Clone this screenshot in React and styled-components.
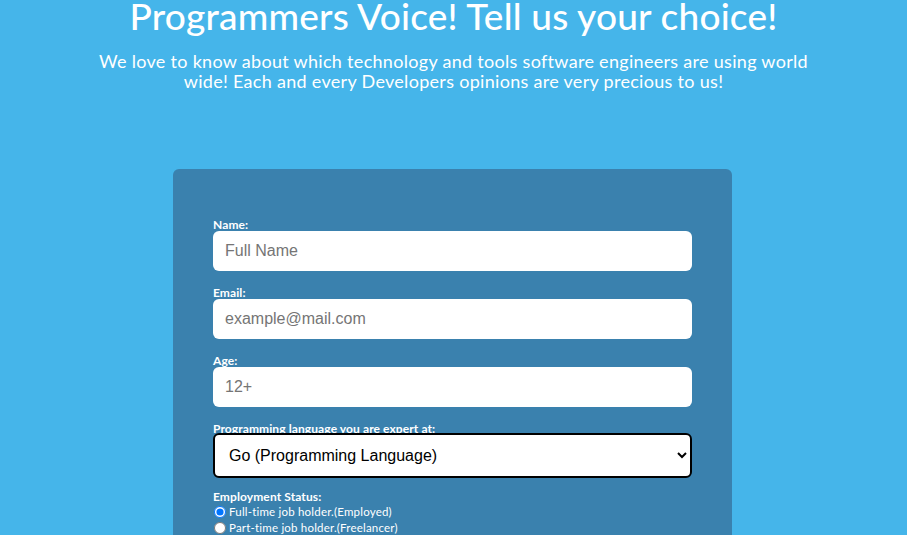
import React from "react";
import styled, { createGlobalStyle } from "styled-components";

const GlobalStyle = createGlobalStyle`
  body {
    margin: 0;
    background-color: #45b5ea;
    font-family: "Lato", "Open Sans", sans-serif;
    overflow: hidden;
  }
`;

const Page = styled.div`
  display: flex;
  flex-direction: column;
  align-items: center;
  color: white;
`;

const Title = styled.h1`
  margin: -4px 0 0 0;
  font-size: 37px;
  line-height: 40px;
  font-weight: 500;
  letter-spacing: 0.2px;
  text-align: center;
`;

const Description = styled.p`
  margin: 15px 0 0 0;
  width: 730px;
  font-size: 18px;
  line-height: 20px;
  font-weight: 400;
  letter-spacing: 0.3px;
  text-align: center;
`;

const Card = styled.form`
  margin: 78px 2px 0 0;
  width: 559px;
  box-sizing: border-box;
  padding: 49px 40px 0 40px;
  background-color: #3a81ae;
  border-radius: 6px;
  height: 400px;
`;

const Field = styled.div`
  display: flex;
  flex-direction: column;
  margin-bottom: 15px;
`;

const Label = styled.label`
  font-size: 12px;
  font-weight: 700;
  line-height: 13px;
  letter-spacing: 0.1px;
`;

const Input = styled.input`
  height: 40px;
  box-sizing: border-box;
  border: none;
  border-radius: 6px;
  padding: 0 12px;
  font-family: "Liberation Sans", Arial, sans-serif;
  font-size: 16px;
  color: #333;
  outline: none;

  &::placeholder {
    color: #757575;
  }
`;

const Select = styled.select`
  height: 45px;
  margin-top: -2px;
  box-sizing: border-box;
  border: 2px solid #000;
  border-radius: 6px;
  padding: 0 10px;
  font-family: "Liberation Sans", Arial, sans-serif;
  font-size: 16px;
  color: #000;
  background: white;
  outline: none;
`;

const StatusGroup = styled.div`
  margin-top: -3px;
`;

const RadioRow = styled.label`
  display: flex;
  align-items: center;
  font-size: 11.5px;
  line-height: 15px;
  height: 16px;
  letter-spacing: 0.2px;

  input {
    margin: 1px 3px 0 1px;
    width: 12px;
    height: 12px;
  }
`;

function App() {
  return (
    <>
      <GlobalStyle />
      <Page>
        <Title>Programmers Voice! Tell us your choice!</Title>
        <Description>
          We love to know about which technology and tools software engineers
          are using world wide! Each and every Developers opinions are very
          precious to us!
        </Description>
        <Card>
          <Field>
            <Label htmlFor="name">Name:</Label>
            <Input id="name" type="text" placeholder="Full Name" />
          </Field>
          <Field>
            <Label htmlFor="email">Email:</Label>
            <Input id="email" type="email" placeholder="example@mail.com" />
          </Field>
          <Field>
            <Label htmlFor="age">Age:</Label>
            <Input id="age" type="number" placeholder="12+" />
          </Field>
          <Field>
            <Label htmlFor="lang">Programming language you are expert at:</Label>
            <Select id="lang" defaultValue="go">
              <option value="go">Go (Programming Language)</option>
              <option value="js">JavaScript</option>
              <option value="py">Python</option>
            </Select>
          </Field>
          <StatusGroup>
            <Label as="div">Employment Status:</Label>
            <RadioRow>
              <input type="radio" name="status" defaultChecked />
              Full-time job holder.(Employed)
            </RadioRow>
            <RadioRow>
              <input type="radio" name="status" />
              Part-time job holder.(Freelancer)
            </RadioRow>
          </StatusGroup>
        </Card>
      </Page>
    </>
  );
}

export default App;
